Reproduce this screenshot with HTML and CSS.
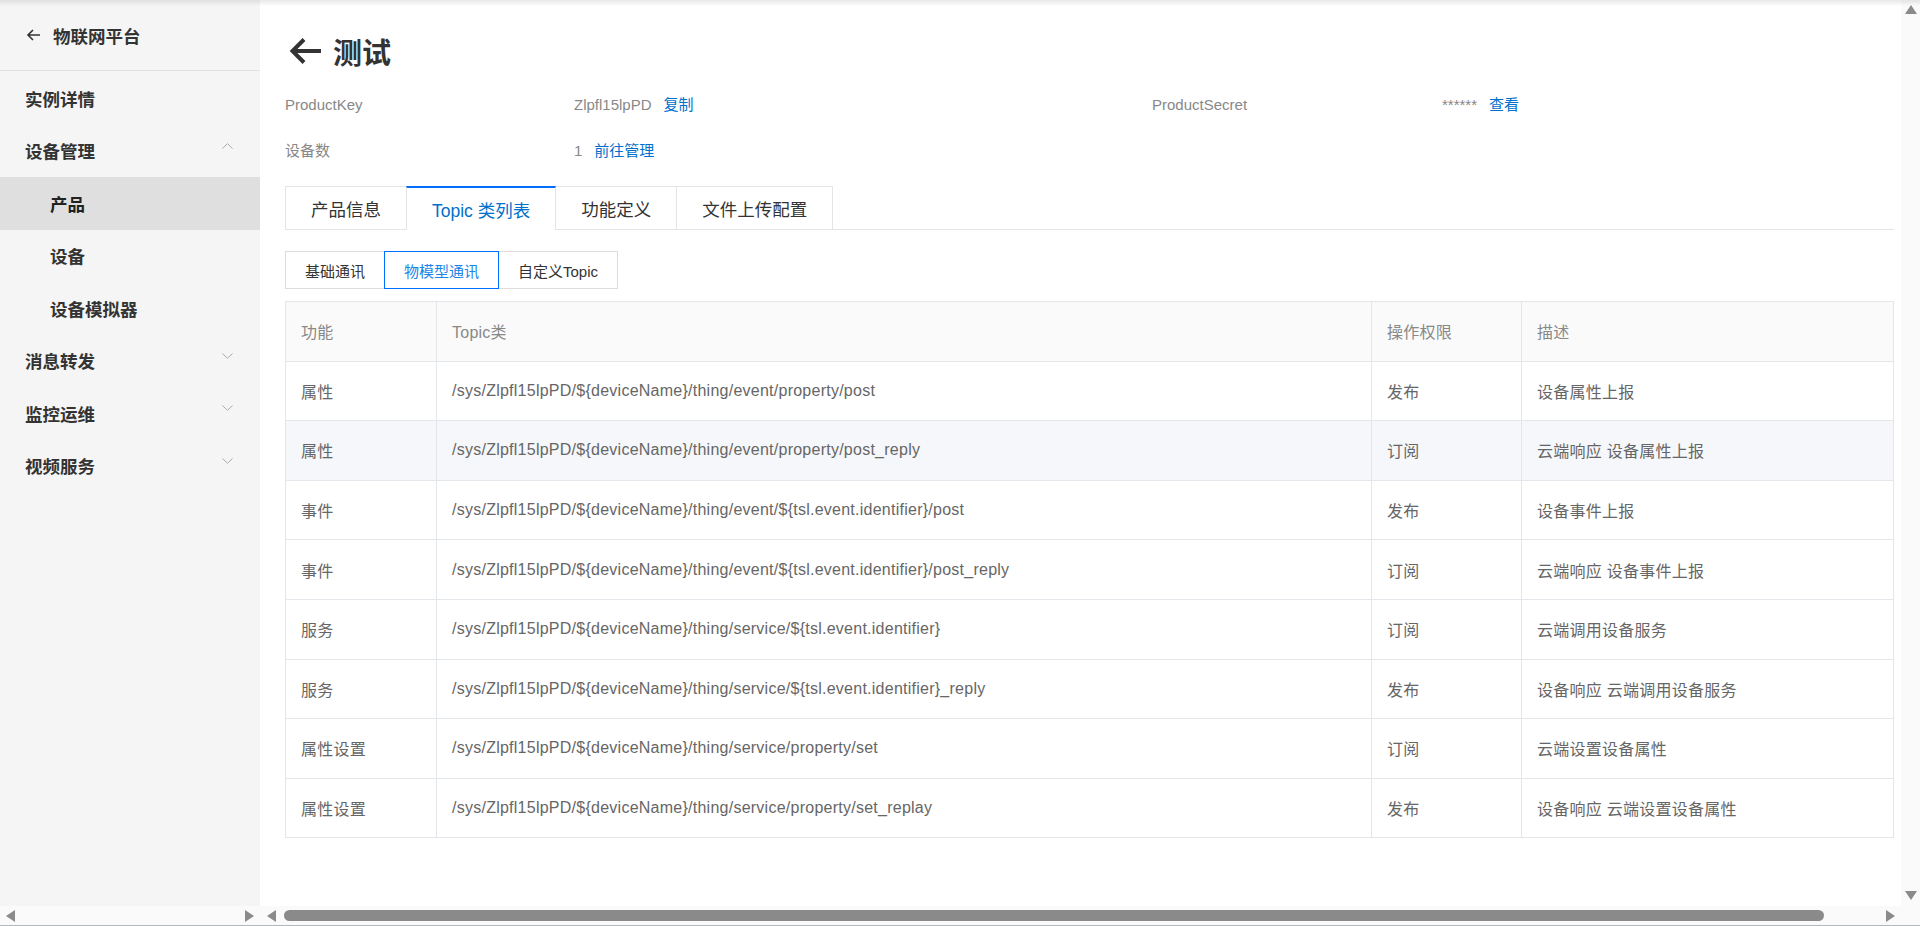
FILE: index.html
```html
<!DOCTYPE html>
<html>
<head>
    <meta charset="utf-8">
    <link rel="stylesheet" href="styles.css">
</head>
<body>
    <div class="layout">
        <aside class="sidebar">
            <div class="side-view">
                <div class="side-head">
                    <svg class="back-sm" width="15" height="12" viewBox="0 0 15 12"><path d="M14 6H2M7 1L2 6l5 5" fill="none" stroke="#333" stroke-width="1.6"/></svg>
                    <span>物联网平台</span>
                </div>
                <ul class="menu">
                    <li class="menu-item">实例详情</li>
                    <li class="menu-item">设备管理<svg class="chev" width="11" height="6" viewBox="0 0 11 6"><path d="M0.5 5.5L5.5 0.7l5 4.8" fill="none" stroke="#aaa" stroke-width="1"/></svg></li>
                    <li class="menu-item sub active">产品</li>
                    <li class="menu-item sub">设备</li>
                    <li class="menu-item sub">设备模拟器</li>
                    <li class="menu-item">消息转发<svg class="chev" width="11" height="6" viewBox="0 0 11 6"><path d="M0.5 0.5l5 4.8 5-4.8" fill="none" stroke="#aaa" stroke-width="1"/></svg></li>
                    <li class="menu-item">监控运维<svg class="chev" width="11" height="6" viewBox="0 0 11 6"><path d="M0.5 0.5l5 4.8 5-4.8" fill="none" stroke="#aaa" stroke-width="1"/></svg></li>
                    <li class="menu-item">视频服务<svg class="chev" width="11" height="6" viewBox="0 0 11 6"><path d="M0.5 0.5l5 4.8 5-4.8" fill="none" stroke="#aaa" stroke-width="1"/></svg></li>
                </ul>
            </div>
            <div class="hbar">
                <span class="tri tri-left"></span>
                <span class="track"></span>
                <span class="tri tri-right"></span>
            </div>
        </aside>

        <main class="main">
            <div class="main-view">
                <div class="content">
                    <h1 class="title">
                        <svg class="back-lg" width="34" height="28" viewBox="0 0 34 28"><path d="M33 14H5M16 2.5L4.5 14 16 25.5" fill="none" stroke="#333" stroke-width="4"/></svg>
                        <span>测试</span>
                    </h1>

                    <div class="info">
                        <div class="info-label">ProductKey</div>
                        <div class="info-value">Zlpfl15lpPD<a class="link">复制</a></div>
                        <div class="info-label">ProductSecret</div>
                        <div class="info-value">******<a class="link">查看</a></div>
                        <div class="info-label">设备数</div>
                        <div class="info-value">1<a class="link">前往管理</a></div>
                    </div>

                    <div class="tabs">
                        <div class="tab">产品信息</div>
                        <div class="tab active">Topic 类列表</div>
                        <div class="tab">功能定义</div>
                        <div class="tab">文件上传配置</div>
                    </div>

                    <div class="subtabs">
                        <div class="subtab">基础通讯</div>
                        <div class="subtab active">物模型通讯</div>
                        <div class="subtab">自定义Topic</div>
                    </div>

                    <table class="topic-table">
                        <colgroup>
                            <col style="width: 151px">
                            <col style="width: 935px">
                            <col style="width: 150px">
                            <col>
                        </colgroup>
                        <thead>
                            <tr><th>功能</th><th>Topic类</th><th>操作权限</th><th>描述</th></tr>
                        </thead>
                        <tbody>
                            <tr><td>属性</td><td>/sys/Zlpfl15lpPD/${deviceName}/thing/event/property/post</td><td>发布</td><td>设备属性上报</td></tr>
                            <tr class="hover"><td>属性</td><td>/sys/Zlpfl15lpPD/${deviceName}/thing/event/property/post_reply</td><td>订阅</td><td>云端响应 设备属性上报</td></tr>
                            <tr><td>事件</td><td>/sys/Zlpfl15lpPD/${deviceName}/thing/event/${tsl.event.identifier}/post</td><td>发布</td><td>设备事件上报</td></tr>
                            <tr><td>事件</td><td>/sys/Zlpfl15lpPD/${deviceName}/thing/event/${tsl.event.identifier}/post_reply</td><td>订阅</td><td>云端响应 设备事件上报</td></tr>
                            <tr><td>服务</td><td>/sys/Zlpfl15lpPD/${deviceName}/thing/service/${tsl.event.identifier}</td><td>订阅</td><td>云端调用设备服务</td></tr>
                            <tr><td>服务</td><td>/sys/Zlpfl15lpPD/${deviceName}/thing/service/${tsl.event.identifier}_reply</td><td>发布</td><td>设备响应 云端调用设备服务</td></tr>
                            <tr><td>属性设置</td><td>/sys/Zlpfl15lpPD/${deviceName}/thing/service/property/set</td><td>订阅</td><td>云端设置设备属性</td></tr>
                            <tr><td>属性设置</td><td>/sys/Zlpfl15lpPD/${deviceName}/thing/service/property/set_replay</td><td>发布</td><td>设备响应 云端设置设备属性</td></tr>
                        </tbody>
                    </table>
                </div>
                <div class="vbar">
                    <span class="tri tri-up"></span>
                    <span class="tri tri-down"></span>
                </div>
            </div>
            <div class="hbar main-hbar">
                <span class="tri tri-left"></span>
                <span class="track"><span class="thumb"></span></span>
                <span class="tri tri-right"></span>
                <span class="corner"></span>
            </div>
        </main>
    </div>
</body>
</html>
```

FILE: styles.css
```css
html, body { margin: 0; padding: 0; height: 926px; }
body { font-family: "Liberation Sans", "Noto Sans CJK SC", sans-serif; color: #333; background: #fff; overflow: hidden; position: relative; }
body::before { content: ""; position: absolute; top: 0; left: 0; right: 0; height: 6px; background: linear-gradient(rgba(0,0,0,0.09), rgba(0,0,0,0)); z-index: 5; }

.layout { display: flex; height: 926px; border-bottom: 1px solid #b4b8bc; box-sizing: border-box; }

/* sidebar */
.sidebar { width: 260px; flex: none; display: flex; flex-direction: column; background: #fafafa; }
.side-view { flex: 1; background: #f5f5f5; }
.side-head { height: 70px; display: flex; align-items: center; gap: 12px; padding-left: 26px; border-bottom: 1px solid #e0e0e0; font-size: 17.5px; font-weight: bold; color: #333; }
.menu { list-style: none; margin: 0; padding: 1px 0 0; }
.menu-item { height: 52.5px; display: flex; align-items: center; justify-content: space-between; padding: 0 27px 0 25px; font-size: 17.5px; font-weight: bold; color: #333; }
.menu-item.sub { padding-left: 50px; }
.menu-item.active { background: #dfdfdf; color: #222; }
.chev { margin-top: -10px; }

/* fake scroll bars */
.hbar { height: 19px; flex: none; display: flex; align-items: center; background: #fafafa; padding: 0 6px; }
.track { flex: 1; height: 11px; display: flex; }
.thumb { margin-left: 8px; width: 1540px; height: 11px; border-radius: 6px; background: #8a8a8a; }
.tri { width: 0; height: 0; flex: none; }
.tri-left { border-top: 6px solid transparent; border-bottom: 6px solid transparent; border-right: 9px solid #8a8a8a; }
.tri-right { border-top: 6px solid transparent; border-bottom: 6px solid transparent; border-left: 9px solid #8a8a8a; }
.tri-up { border-left: 6px solid transparent; border-right: 6px solid transparent; border-bottom: 9px solid #8a8a8a; }
.tri-down { border-left: 6px solid transparent; border-right: 6px solid transparent; border-top: 9px solid #8a8a8a; }
.main-hbar { padding: 0 0 0 7px; }
.main-hbar .tri-right { margin-right: 6px; }
.corner { width: 19px; height: 19px; }

/* main */
.main { flex: 1; min-width: 0; display: flex; flex-direction: column; }
.main-view { flex: 1; display: flex; min-height: 0; }
.content { flex: 1; min-width: 0; padding: 31px 7px 0 25px; }
.vbar { width: 19px; flex: none; background: #fafafa; display: flex; flex-direction: column; justify-content: space-between; align-items: center; padding: 5px 0 6px; box-sizing: border-box; }

.title { margin: 0; height: 40px; display: flex; align-items: center; gap: 11px; font-size: 29px; font-weight: bold; color: #333; }
.back-lg { margin-left: 3px; }

.info { display: grid; grid-template-columns: 289px 578px 290px 1fr; row-gap: 24px; margin-top: 23px; font-size: 15px; line-height: 22px; color: #888; }
.link { color: #0070cc; margin-left: 10px; }
.info-value .link { margin-left: 12px; }

.tabs { display: flex; margin-top: 24px; border-bottom: 1px solid #e5e5e5; height: 43px; }
.tab { height: 43px; box-sizing: border-box; padding: 0 25px; display: flex; align-items: center; border: 1px solid #e5e5e5; border-bottom: none; margin-right: -1px; font-size: 17.5px; color: #333; background: #fff; }
.tab.active { border-top: 2px solid #006eff; color: #0070cc; height: 44px; position: relative; z-index: 1; }

.subtabs { display: flex; margin-top: 21px; }
.subtab { height: 38px; box-sizing: border-box; padding: 0 19px; display: flex; align-items: center; border: 1px solid #ddd; margin-right: -1px; font-size: 15px; color: #333; }
.subtab.active { border-color: #006eff; color: #1a84e8; position: relative; z-index: 1; }

.topic-table { margin-top: 12px; width: 100%; border-collapse: collapse; table-layout: fixed; font-size: 16px; letter-spacing: 0.25px; }
.topic-table th, .topic-table td { height: 58.6px; border: 1px solid #e3e6eb; padding: 0 15px; text-align: left; font-weight: normal; white-space: nowrap; }
.topic-table th { background: #fafafa; color: #888; }
.topic-table td { color: #666; }
.topic-table tr.hover td { background: #f5f7fa; }
```
